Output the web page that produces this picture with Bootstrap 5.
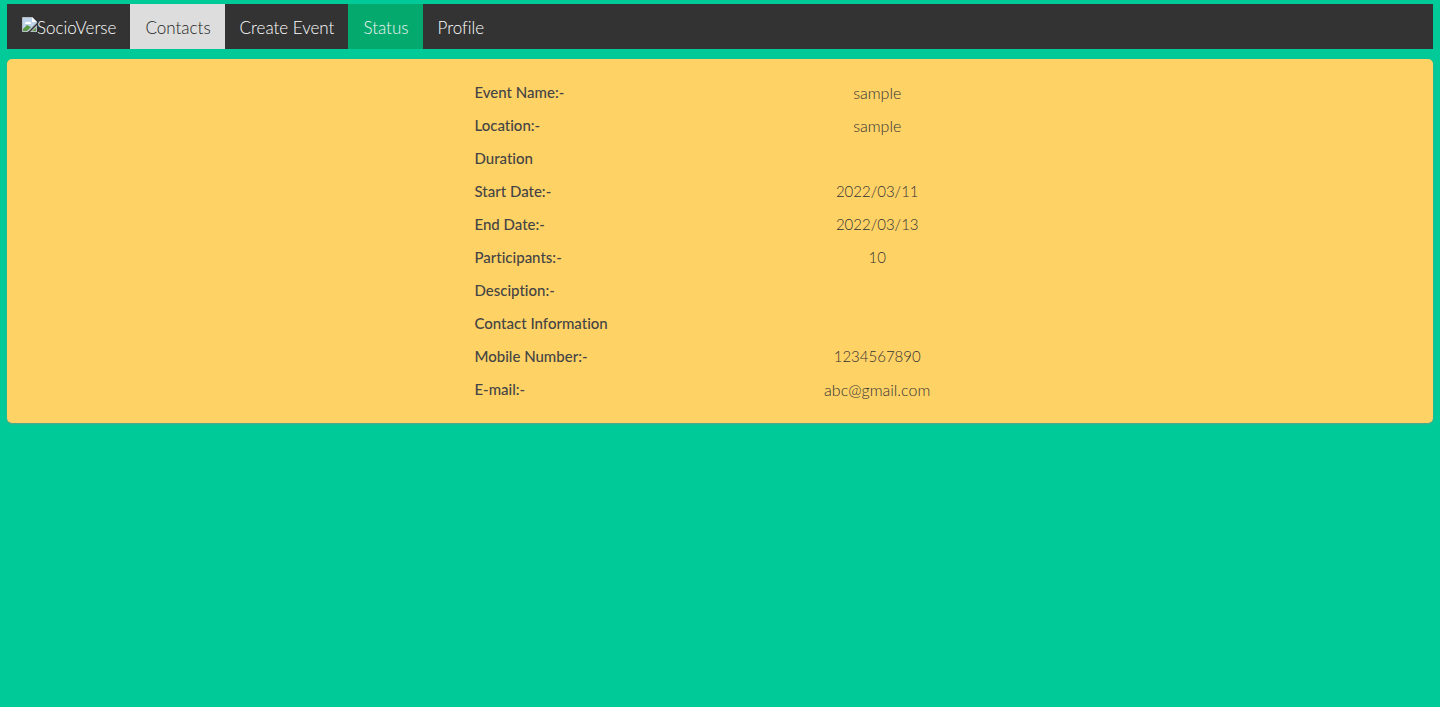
<!DOCTYPE html>
<html lang="en">
<head>
<meta charset="utf-8">
<meta name="viewport" content="width=device-width, initial-scale=1">
<title>SocioVerse</title>
<link href="https://cdn.jsdelivr.net/npm/bootstrap@5.3.0/dist/css/bootstrap.min.css" rel="stylesheet">
<style>
body { background: #00ca98; color: #444; font-family: Lato, "Open Sans", sans-serif; font-size: 15px; font-variant-ligatures: none; padding: 4px 7px; }
.topnav { background: #333; margin-bottom: 10px; }
.topnav .nav-link { color: #fff; font-size: 17px; font-weight: 300; line-height: 25px; padding: 11px 14px 9px 15px; }
.topnav .nav-link.hovered { background: #ddd; color: #222; }
.topnav .nav-link.active { background: #04aa6d; color: #f2f2f2; }
.event-card { background: #ffd266; border-radius: 5px; box-shadow: 0 1px 2px #6a9c87; padding: 17px 0; }
.event-table { width: 35%; min-width: 300px; color: #444; line-height: 25px; }
.event-table th, .event-table td { padding: 4px; }
.event-table th { width: 63%; font-weight: 500; }
.event-table td { color: #333; font-size: 16px; font-weight: 300; text-align: center; }
.event-table .figures { font-size: 15px; }
</style>
</head>
<body>
<nav class="topnav">
  <div class="nav">
    <a class="nav-link d-flex" href="#" aria-label="SocioVerse"><svg class="flex-shrink-0" width="15" height="18" viewBox="0 0 15 18" aria-hidden="true"><path fill="#bfd3ea" stroke="#b5bdc2" d="M.5 2.500h9.500l4.500 4.500v1L6 16.500H.500z"/><path fill="#fff" d="M10 2v5h5zM3 9a2 2 0 0 1 3-2 2 2 0 0 1 3 2z"/><path fill="#5a9a45" d="M1 16v-2l4-4 4 2-4 4z"/><path fill="#b5bdc2" d="M8 17l7-7v7z"/><path fill="#5a9a45" d="M10 16l4-3v3z"/></svg><span>SocioVerse</span></a>
    <a class="nav-link hovered" href="#">Contacts</a>
    <a class="nav-link" href="#">Create Event</a>
    <a class="nav-link active" href="#" aria-current="page">Status</a>
    <a class="nav-link" href="#">Profile</a>
  </div>
</nav>
<main class="event-card">
  <table class="event-table mx-auto">
    <tbody>
      <tr><th scope="row">Event Name:-</th><td>sample</td></tr>
      <tr><th scope="row">Location:-</th><td>sample</td></tr>
      <tr><th scope="row">Duration</th><td></td></tr>
      <tr><th scope="row">Start Date:-</th><td class="figures">2022/03/11</td></tr>
      <tr><th scope="row">End Date:-</th><td class="figures">2022/03/13</td></tr>
      <tr><th scope="row">Participants:-</th><td class="figures">10</td></tr>
      <tr><th scope="row">Desciption:-</th><td></td></tr>
      <tr><th scope="row">Contact Information</th><td></td></tr>
      <tr><th scope="row">Mobile Number:-</th><td class="figures">1234567890</td></tr>
      <tr><th scope="row">E-mail:-</th><td>abc@gmail.com</td></tr>
    </tbody>
  </table>
</main>
<script src="https://cdn.jsdelivr.net/npm/bootstrap@5.3.0/dist/js/bootstrap.bundle.min.js"></script>
</body>
</html>
